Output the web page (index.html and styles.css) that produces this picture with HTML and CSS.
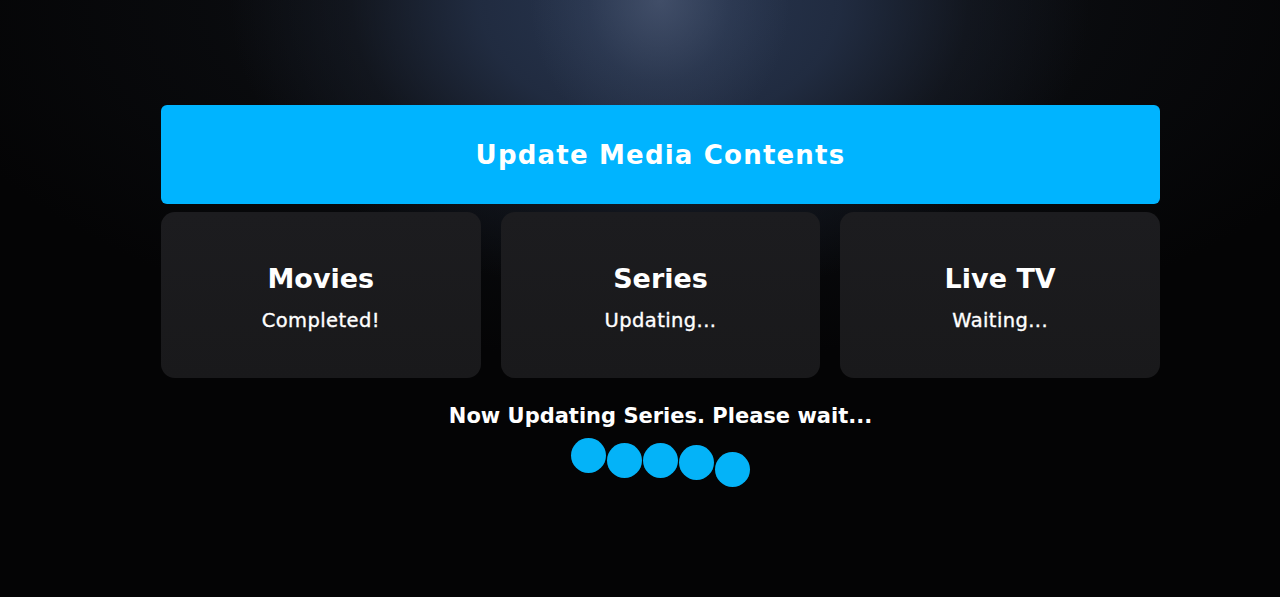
FILE: index.html
```html
<!DOCTYPE html>
<html>
<head>
<meta charset="utf-8">
<link rel="stylesheet" href="styles.css">
</head>
<body>
<div class="page">
  <div class="banner">Update Media Contents</div>
  <div class="cards">
    <div class="card">
      <div class="card-title">Movies</div>
      <div class="card-status">Completed!</div>
    </div>
    <div class="card">
      <div class="card-title">Series</div>
      <div class="card-status">Updating...</div>
    </div>
    <div class="card">
      <div class="card-title">Live TV</div>
      <div class="card-status">Waiting...</div>
    </div>
  </div>
  <div class="message">Now Updating Series. Please wait...</div>
  <div class="dots">
    <span class="dot d1"></span>
    <span class="dot d2"></span>
    <span class="dot d3"></span>
    <span class="dot d4"></span>
    <span class="dot d5"></span>
  </div>
</div>
</body>
</html>
```
FILE: styles.css
```css
html, body {
  margin: 0;
  padding: 0;
  height: 100%;
}
body {
  background-color: #040405;
  background-image:
    radial-gradient(ellipse 130px 150px at 660px 0px, rgba(90,102,128,0.5), rgba(70,84,112,0.22) 55%, rgba(50,60,85,0) 100%),
    radial-gradient(ellipse 430px 300px at 660px 0px, rgba(40,54,80,1), rgba(35,47,70,0.88) 42%, rgba(24,30,42,0.5) 72%, rgba(10,12,16,0) 100%),
    radial-gradient(ellipse 760px 360px at 660px 0px, rgba(20,24,32,0.95), rgba(12,14,18,0.6) 60%, rgba(4,4,5,0) 100%);
  background-repeat: no-repeat;
  font-family: "DejaVu Sans", "Open Sans", sans-serif;
  color: #ffffff;
  overflow: hidden;
}
.page {
  width: 999px;
  margin-left: 161px;
  padding-top: 105px;
  display: flex;
  flex-direction: column;
  align-items: center;
}
.banner {
  width: 999px;
  height: 99px;
  background: #00b4ff;
  border-radius: 6px;
  display: flex;
  align-items: center;
  justify-content: center;
  font-size: 26px;
  font-weight: 700;
  letter-spacing: 1.2px;
}
.cards {
  width: 999px;
  margin-top: 8px;
  display: grid;
  grid-template-columns: repeat(3, 1fr);
  gap: 20px;
}
.card {
  height: 166px;
  box-sizing: border-box;
  padding-top: 50px;
  background: linear-gradient(180deg, #1c1c1f 0%, #19191b 100%);
  border-radius: 14px;
  display: flex;
  flex-direction: column;
  align-items: center;
}
.card-title {
  font-size: 27px;
  font-weight: 700;
  line-height: 34px;
}
.card-status {
  font-size: 19.5px;
  font-weight: 400;
  line-height: 24px;
  letter-spacing: 0.4px;
  margin-top: 13px;
  -webkit-text-stroke: 0.35px #ffffff;
}
.message {
  margin-top: 25px;
  font-size: 21px;
  font-weight: 700;
  line-height: 26px;
}
.dots {
  display: flex;
  align-items: flex-start;
  margin-top: 9px;
  height: 52px;
  padding-left: 1px;
}
.dot {
  width: 35px;
  height: 35px;
  border-radius: 50%;
  background: #04b3f8;
  margin-right: 1px;
}
.d2 { margin-top: 5px; }
.d3 { margin-top: 5px; }
.d4 { margin-top: 7px; }
.d5 { margin-top: 14px; }
```
